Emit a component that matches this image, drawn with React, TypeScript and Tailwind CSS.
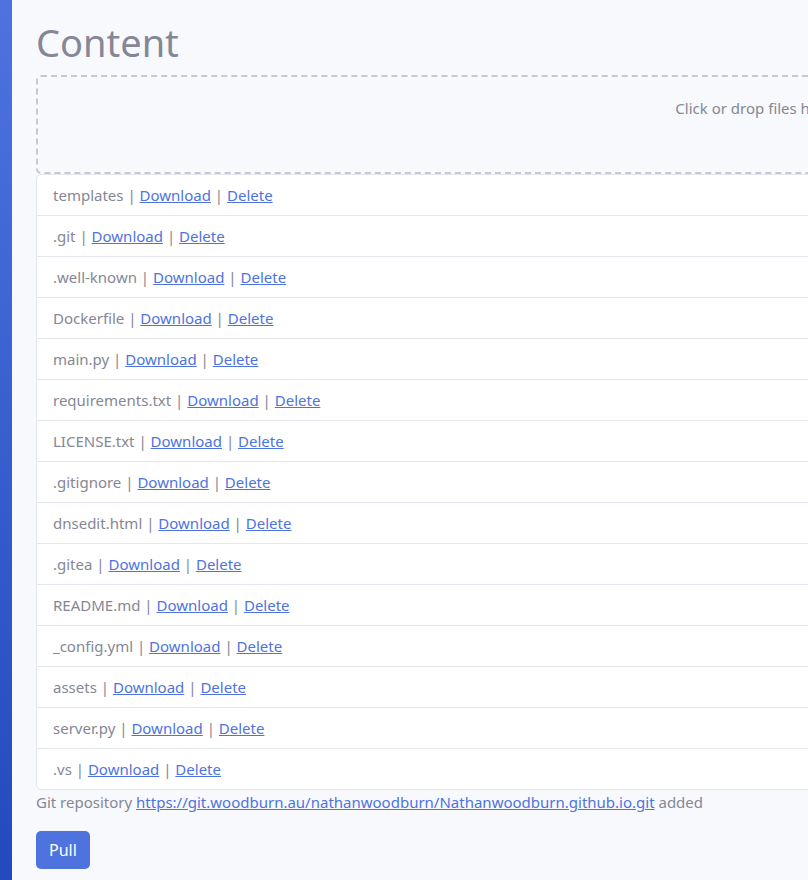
const FILES = [
  'templates',
  '.git',
  '.well-known',
  'Dockerfile',
  'main.py',
  'requirements.txt',
  'LICENSE.txt',
  '.gitignore',
  'dnsedit.html',
  '.gitea',
  'README.md',
  '_config.yml',
  'assets',
  'server.py',
  '.vs',
];

const REPO = 'https://git.woodburn.au/nathanwoodburn/Nathanwoodburn.github.io.git';

export default function App() {
  return (
    <div className="flex min-h-[880px] w-[808px] overflow-hidden bg-[#f8f9fc] font-['Noto_Sans',sans-serif] text-[15px] text-[#858796]">
      {/* sidebar edge */}
      <div className="w-3 shrink-0 bg-gradient-to-b from-[#4e73df] to-[#224abe]" />

      <div className="w-[1484px] shrink-0 px-6 pt-[16px]">
        <h1 className="mb-[7px] text-[38px] leading-[52px] font-normal text-[#858796]">Content</h1>

        {/* dropzone */}
        <div className="h-[99px] rounded-[5px] border-2 border-dashed border-[#c9c9cc] pt-[20px] text-center">
          Click or drop files here
        </div>

        {/* file list */}
        <ul className="rounded-[5px] border border-[#e3e6f0] bg-white">
          {FILES.map((f) => (
            <li key={f} className="border-b border-[#e3e6f0] px-4 py-2 leading-6 last:border-b-0">
              {f} | <a href="#" className="text-[#4e73df] underline">Download</a> |{' '}
              <a href="#" className="text-[#4e73df] underline">Delete</a>
            </li>
          ))}
        </ul>

        <p className="leading-6">
          Git repository <a href="#" className="text-[#4e73df] underline">{REPO}</a> added
        </p>

        <button className="mt-[17px] h-[38px] rounded-[5px] bg-[#4e73df] px-[13px] text-[16px] text-white">Pull</button>
      </div>
    </div>
  );
}
